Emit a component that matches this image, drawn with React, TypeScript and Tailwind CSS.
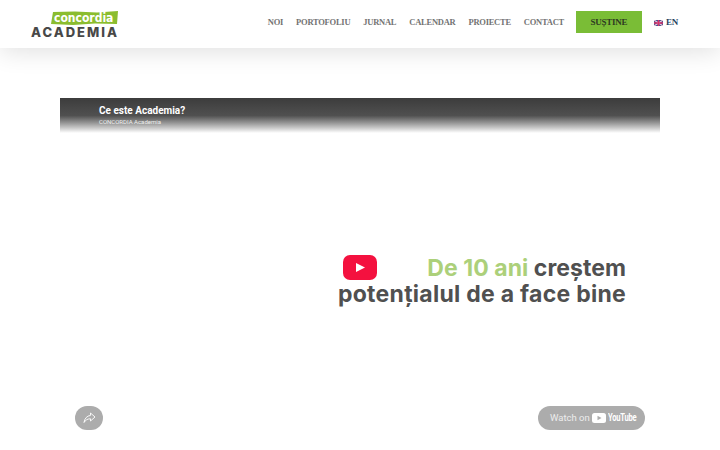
const navItems = ["NOI", "PORTOFOLIU", "JURNAL", "CALENDAR", "PROIECTE", "CONTACT"];

function Flag() {
  return (
    <svg width="9" height="6" viewBox="0 0 9 6" className="block">
      <rect width="9" height="6" fill="#3d4f8f" />
      <path d="M0 0L9 6M9 0L0 6" stroke="#f0c8d8" strokeWidth="1.2" />
      <path d="M4.5 0V6M0 3H9" stroke="#d8336a" strokeWidth="1.4" />
    </svg>
  );
}

function Logo() {
  return (
    <div className="flex flex-col items-end w-[88px] mt-[4px]">
      <div className="relative w-[67px] h-[14px] mr-[1px]">
        <svg width="67" height="14" viewBox="0 0 67 14" className="absolute inset-0">
          <path d="M2 1L24 0.5L46 1.5L67 0L66 13L44 12.5L22 14L0 13Z" fill="#8bbd2f" />
        </svg>
        <span className="absolute left-[3px] top-[-1px] text-[12px] leading-[16px] font-bold text-white font-['DejaVu_Sans_Condensed','DejaVu_Sans',sans-serif]">
          concordia
        </span>
      </div>
      <div className="text-[#484848] text-[13px] leading-[12px] mt-[1px] font-extrabold tracking-[2px] font-['Inter',sans-serif] whitespace-nowrap">
        ACADEMIA
      </div>
    </div>
  );
}

function YoutubeRed() {
  return (
    <svg width="34" height="25" viewBox="0 0 34 25" className="block">
      <rect width="34" height="25" rx="7" fill="#f4113f" />
      <path d="M13 8L22 12.5L13 17Z" fill="#fff" />
    </svg>
  );
}

export default function App() {
  return (
    <div className="w-[720px] h-[450px] overflow-hidden bg-white flex flex-col">
      <header className="h-[48px] shrink-0 bg-white shadow-[0_4px_24px_rgba(0,0,0,0.12)] flex items-center pl-[31px] pr-[42px] pb-[4px] relative z-10">
        <Logo />
        <nav className="ml-auto flex items-center gap-[13px] font-['Liberation_Serif',serif] font-bold text-[8.5px] text-[#737373] tracking-[-0.25px]">
          {navItems.map((item) => (
            <span key={item} className="pt-[1px]">{item}</span>
          ))}
          <div className="w-[66px] h-[22px] bg-[#7abd36] flex items-center justify-center pt-[1px] text-[#2e3b22] text-[9px] -ml-[1px]">
            SUȘTINE
          </div>
          <div className="flex items-center gap-[3px] -ml-[1px] pt-[1px] text-[#1f3f5e] text-[9px]">
            <Flag />
            <span>EN</span>
          </div>
        </nav>
      </header>

      <main className="px-[60px] pt-[50px]">
        <section className="relative h-[338px] bg-white">
          <div className="h-[35px] bg-gradient-to-b from-[#3c3c3c] via-[#505050] to-white pl-[39px] pt-[6px] font-['Roboto',sans-serif]">
            <div className="text-white text-[10px] leading-[13px] font-bold">Ce este Academia?</div>
            <div className="text-[#eeeeee] text-[6px] leading-[9px]">CONCORDIA Academia</div>
          </div>

          <div className="absolute left-[283px] top-[157px]">
            <YoutubeRed />
          </div>

          <div className="absolute right-[34px] top-[157px] text-right font-['Inter',sans-serif] font-bold text-[23px] leading-[26px] text-[#505050] tracking-[0.27px] whitespace-nowrap">
            <div className="tracking-[0.05px]">
              <span className="text-[#acd07a]">De 10 ani</span> creștem
            </div>
            <div>potențialul de a face bine</div>
          </div>

          <div className="absolute left-[15px] top-[308px] w-[28px] h-[24px] rounded-full bg-[#acacac] flex items-center justify-center">
            <svg width="13" height="12" viewBox="0 0 13 12" fill="none" stroke="#fff" strokeWidth="0.9">
              <path d="M7.5 1L12 5L7.5 9V6.8C4.5 6.8 2.5 8 1 10.5C1.5 6.5 4 3.8 7.5 3.4Z" />
            </svg>
          </div>

          <div className="absolute left-[478px] top-[308px] w-[107px] h-[24px] rounded-full bg-[#acacac] flex items-center pl-[12px] gap-[2px] text-white font-['Roboto',sans-serif] whitespace-nowrap">
            <span className="text-[9.5px] text-[#ececec]">Watch on</span>
            <svg width="14" height="10" viewBox="0 0 14 10" className="shrink-0">
              <rect width="14" height="10" rx="2.5" fill="#fff" />
              <path d="M5.5 2.8L9.5 5L5.5 7.2Z" fill="#acacac" />
            </svg>
            <span className="text-[10.5px] font-bold tracking-[-0.3px] scale-x-[0.72] origin-left">YouTube</span>
          </div>
        </section>
      </main>
    </div>
  );
}
